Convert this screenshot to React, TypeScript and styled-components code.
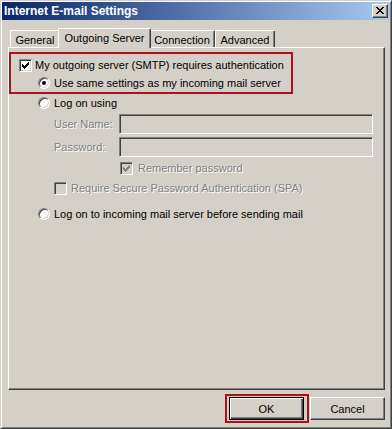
import React from "react";
import styled, { createGlobalStyle, css } from "styled-components";

const GlobalStyle = createGlobalStyle`
  html, body { margin: 0; padding: 0; background: #D4D0C8; }
  body { font-family: "Liberation Sans", Arial, sans-serif; font-size: 11px; color: #000; }
`;

const Window = styled.div`
  box-sizing: border-box;
  width: 392px;
  height: 429px;
  background: #d4d0c8;
  border: 1px solid;
  border-color: #d4d0c8 #404040 #404040 #d4d0c8;
  box-shadow: inset 1px 1px #fff, inset -1px -1px #808080;
  padding: 1px;
  display: flex;
  flex-direction: column;
`;

const TitleBar = styled.div`
  height: 18px;
  flex: none;
  background: linear-gradient(to right, #0a246a, #a6caf0);
  display: flex;
  align-items: center;
  justify-content: space-between;
  padding: 0 2px 0 2px;
`;

const TitleText = styled.span`
  color: #fff;
  font-weight: bold;
  font-size: 12px;
`;

const CloseButton = styled.div`
  box-sizing: border-box;
  width: 16px;
  height: 14px;
  background: #d4d0c8;
  border: 1px solid;
  border-color: #fff #404040 #404040 #fff;
  box-shadow: inset -1px -1px #808080;
  display: flex;
  align-items: center;
  justify-content: center;
  padding: 0 1px 1px 0;
`;

const Body = styled.div`
  flex: 1;
  display: flex;
  flex-direction: column;
  padding: 8px 5px 7px 6px;
  min-height: 0;
`;

const TabStrip = styled.div`
  height: 20px;
  flex: none;
  display: flex;
  align-items: flex-end;
  padding-left: 2px;
  margin-bottom: -1px;
  position: relative;
  z-index: 1;
`;

const Tab = styled.div<{ $w: number; $active?: boolean }>`
  box-sizing: border-box;
  width: ${(p) => p.$w}px;
  height: 17px;
  margin-bottom: 1px;
  background: #d4d0c8;
  border-top: 1px solid #fff;
  border-left: 1px solid #fff;
  border-right: 1px solid #404040;
  border-radius: 2px 2px 0 0;
  box-shadow: inset -1px 0 #808080;
  display: flex;
  align-items: center;
  justify-content: center;
  padding-top: 2px;
  white-space: nowrap;
  ${(p) =>
    p.$active &&
    css`
      width: ${p.$w + 4}px;
      height: 20px;
      margin: 0 -2px;
      padding-top: 0;
      padding-bottom: 2px;
      position: relative;
      z-index: 2;
    `}
`;

const Panel = styled.div`
  flex: 1;
  box-sizing: border-box;
  border: 1px solid;
  border-color: #fff #404040 #404040 #fff;
  box-shadow: inset -1px -1px #808080;
  display: flex;
  flex-direction: column;
`;

const Highlight = styled.div`
  box-sizing: border-box;
  width: 284px;
  margin-top: 4px;
  border: 2px solid #b0101c;
  padding: 3px 0 1px 0;
`;

const Row = styled.div<{ $indent: number; $top?: number; $gap?: number }>`
  height: 16px;
  display: flex;
  align-items: center;
  gap: ${(p) => p.$gap ?? 4}px;
  margin-left: ${(p) => p.$indent}px;
  margin-top: ${(p) => p.$top ?? 0}px;
  white-space: nowrap;
`;

const FieldRow = styled.div<{ $top: number }>`
  height: 20px;
  display: flex;
  align-items: center;
  margin-left: 45px;
  margin-top: ${(p) => p.$top}px;
`;

const Label = styled.span<{ $disabled?: boolean }>`
  ${(p) =>
    p.$disabled &&
    css`
      color: #808080;
      text-shadow: 1px 1px 0 #fff;
    `}
`;

const FieldLabel = styled(Label)`
  width: 65px;
  flex: none;
`;

const TextInput = styled.input`
  box-sizing: border-box;
  width: 254px;
  height: 20px;
  margin: 0;
  background: #d4d0c8;
  border: 1px solid;
  border-color: #808080 #fff #fff #808080;
  box-shadow: inset 1px 1px #404040, inset -1px -1px #d4d0c8;
  font: inherit;
`;

const CheckBox = styled.span<{ $disabled?: boolean }>`
  box-sizing: border-box;
  flex: none;
  width: 13px;
  height: 13px;
  background: ${(p) => (p.$disabled ? "#d4d0c8" : "#fff")};
  border: 1px solid;
  border-color: #808080 #fff #fff #808080;
  box-shadow: inset 1px 1px #404040, inset -1px -1px #d4d0c8;
  display: flex;
  align-items: center;
  justify-content: center;
`;

const Radio = styled.span<{ $checked?: boolean }>`
  box-sizing: border-box;
  flex: none;
  width: 12px;
  height: 12px;
  border-radius: 50%;
  background: #fff;
  border: 1px solid;
  border-color: #808080 #fff #fff #808080;
  box-shadow: inset 1px 1px #404040, inset -1px -1px #d4d0c8;
  display: flex;
  align-items: center;
  justify-content: center;
  &::after {
    content: "";
    width: 4px;
    height: 4px;
    border-radius: 50%;
    background: ${(p) => (p.$checked ? "#000" : "transparent")};
  }
`;

const ButtonRow = styled.div`
  flex: none;
  display: flex;
  justify-content: flex-end;
  gap: 6px;
  margin-top: 7px;
`;

const ButtonSlot = styled.div`
  position: relative;
`;

const Button = styled.button<{ $default?: boolean }>`
  box-sizing: border-box;
  width: 75px;
  height: 23px;
  margin: 0;
  padding: 0;
  background: #d4d0c8;
  font: inherit;
  color: #000;
  border: 1px solid;
  border-color: #fff #404040 #404040 #fff;
  box-shadow: inset -1px -1px #808080;
  ${(p) =>
    p.$default &&
    css`
      border-color: #000;
      box-shadow: inset 1px 1px #fff, inset -1px -1px #404040, inset -2px -2px #808080;
    `}
`;

const Annotation = styled.div`
  position: absolute;
  left: -4px;
  right: -5px;
  top: -3px;
  bottom: -3px;
  border: 2px solid #b0101c;
  pointer-events: none;
`;

const CHECK = "M3 5h1v1h1v1h1v-1h1v-1h1v-1h1v-1h1v3h-1v1h-1v1h-1v1h-1v1h-1v-1h-1v-1h-1z";

const Check = ({ color }: { color: string }) => (
  <svg width="7" height="7" viewBox="3 3 7 7" shapeRendering="crispEdges">
    <path d={CHECK} fill={color} />
  </svg>
);

const CloseX = () => {
  const rows: [number, number][][] = [
    [[0, 2], [6, 2]],
    [[1, 2], [5, 2]],
    [[2, 4]],
    [[3, 2]],
    [[2, 4]],
    [[1, 2], [5, 2]],
    [[0, 2], [6, 2]],
  ];
  return (
    <svg width="8" height="7" viewBox="0 0 8 7" shapeRendering="crispEdges">
      {rows.map((r, y) =>
        r.map(([x, w], i) => <rect key={`${y}-${i}`} x={x} y={y} width={w} height={1} fill="#000" />)
      )}
    </svg>
  );
};

export default function App() {
  return (
    <>
      <GlobalStyle />
      <Window>
        <TitleBar>
          <TitleText>Internet E-mail Settings</TitleText>
          <CloseButton>
            <CloseX />
          </CloseButton>
        </TitleBar>
        <Body>
          <TabStrip>
            <Tab $w={50}>General</Tab>
            <Tab $w={89} $active>
              Outgoing Server
            </Tab>
            <Tab $w={66}>Connection</Tab>
            <Tab $w={60}>Advanced</Tab>
          </TabStrip>
          <Panel>
            <Highlight>
              <Row $indent={8} $gap={3}>
                <CheckBox>
                  <Check color="#000" />
                </CheckBox>
                <Label>My outgoing server (SMTP) requires authentication</Label>
              </Row>
              <Row $indent={27} $top={2}>
                <Radio $checked />
                <Label>Use same settings as my incoming mail server</Label>
              </Row>
            </Highlight>
            <Row $indent={29} $top={1}>
              <Radio />
              <Label>Log on using</Label>
            </Row>
            <FieldRow $top={3}>
              <FieldLabel $disabled>User Name:</FieldLabel>
              <TextInput disabled />
            </FieldRow>
            <FieldRow $top={3}>
              <FieldLabel $disabled>Password:</FieldLabel>
              <TextInput disabled type="password" />
            </FieldRow>
            <Row $indent={111} $top={3} $gap={5}>
              <CheckBox $disabled>
                <Check color="#808080" />
              </CheckBox>
              <Label $disabled>Remember password</Label>
            </Row>
            <Row $indent={45} $top={4}>
              <CheckBox $disabled />
              <Label $disabled>Require Secure Password Authentication (SPA)</Label>
            </Row>
            <Row $indent={29} $top={10}>
              <Radio />
              <Label>Log on to incoming mail server before sending mail</Label>
            </Row>
          </Panel>
          <ButtonRow>
            <ButtonSlot>
              <Button $default>OK</Button>
              <Annotation />
            </ButtonSlot>
            <Button>Cancel</Button>
          </ButtonRow>
        </Body>
      </Window>
    </>
  );
}
